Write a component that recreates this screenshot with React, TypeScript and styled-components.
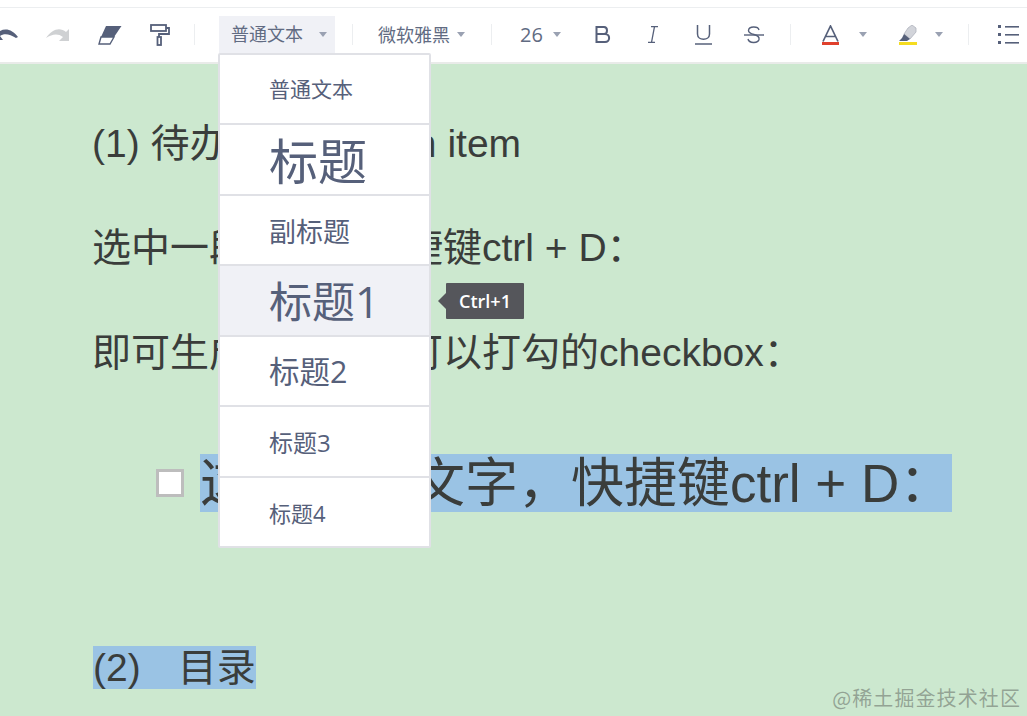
import * as React from 'react';
import styled, { createGlobalStyle } from 'styled-components';

const GlobalStyle = createGlobalStyle`
  html, body {
    margin: 0;
    height: 100%;
    overflow: hidden;
    background: #cce8cf;
  }
  #root {
    height: 100%;
  }
`;

const Page = styled.div`
  position: relative;
  display: flex;
  flex-direction: column;
  height: 716px;
  overflow: hidden;
  font-family: 'Liberation Sans', 'Noto Sans CJK SC', sans-serif;
`;

const TopStrip = styled.div`
  height: 7px;
  background: #fff;
  border-bottom: 1px solid #eceef0;
`;

const Toolbar = styled.div`
  display: flex;
  align-items: center;
  height: 54px;
  background: #fff;
  border-bottom: 2px solid #e9ebe9;
  color: #56607a;
  font-family: 'Open Sans', 'Noto Sans CJK SC', sans-serif;
`;

const Slot = styled.div<{ $ml: number }>`
  display: flex;
  flex: none;
  margin-left: ${(p) => p.$ml}px;
  margin-top: -1px;
`;

const Sep = styled.div<{ $ml: number }>`
  flex: none;
  width: 1px;
  height: 21px;
  margin-left: ${(p) => p.$ml}px;
  margin-top: -1px;
  background: #eceef0;
`;

const StyleSelect = styled.div`
  display: flex;
  flex: none;
  align-items: center;
  width: 116px;
  height: 37px;
  margin-left: 24px;
  margin-top: -1px;
  padding-left: 12px;
  box-sizing: border-box;
  background: #f0f1f6;
  font-size: 18px;
`;

const SelectText = styled.span<{ $ml: number; $size: number }>`
  flex: none;
  margin-left: ${(p) => p.$ml}px;
  margin-top: -1px;
  font-size: ${(p) => p.$size}px;
  line-height: 24px;
  color: #616b82;
`;

const Caret = styled.i<{ $ml: number }>`
  flex: none;
  width: 0;
  height: 0;
  margin-left: ${(p) => p.$ml}px;
  margin-top: -1px;
  border-left: 4.5px solid transparent;
  border-right: 4.5px solid transparent;
  border-top: 5px solid #9aa1b2;
`;

const Editor = styled.main`
  flex: 1;
  padding: 54px 0 0 92px;
  color: #3a3d3b;
  font-size: 39px;
  line-height: 52px;
`;

const Para = styled.p<{ $mt: number }>`
  margin: ${(p) => p.$mt}px 0 0;
  white-space: nowrap;
`;

const Marked = styled.span`
  margin-left: 1px;
  background: #9ac3e4;
`;

const NumGap = styled.span`
  display: inline-block;
  width: 37px;
`;

const TodoRow = styled.div`
  display: flex;
  align-items: center;
  height: 58px;
  margin: 75px 0 0 64px;
  white-space: nowrap;
  font-size: 53px;
`;

const Checkbox = styled.span`
  flex: none;
  width: 22px;
  height: 22px;
  margin-right: 16px;
  background: #fff;
  border: 3px solid #bdbdbd;
`;

const TodoText = styled.span`
  display: block;
  height: 58px;
  line-height: 60px;
  background: #9ac3e4;
`;

const Menu = styled.ul`
  position: absolute;
  left: 218px;
  top: 53px;
  width: 213px;
  height: 495px;
  margin: 0;
  padding: 0;
  box-sizing: border-box;
  list-style: none;
  background: #fff;
  border: 2px solid #e0e1e6;
  border-radius: 2px;
  font-family: 'Open Sans', 'Noto Sans CJK SC', sans-serif;
  color: #56607a;
`;

const MenuRow = styled.li<{ $size: number; $active?: boolean; $h: number; $lift: number }>`
  position: relative;
  display: flex;
  align-items: center;
  height: ${(p) => p.$h}px;
  padding: 0 0 ${(p) => p.$lift}px 49px;
  box-sizing: border-box;
  font-size: ${(p) => p.$size}px;
  background: ${(p) => (p.$active ? '#f0f1f6' : '#fff')};
  border-bottom: 2px solid #e0e1e6;

  &:last-child {
    border-bottom: 0;
  }
`;

const Tooltip = styled.div`
  position: absolute;
  left: 226px;
  top: 17px;
  width: 78px;
  height: 36px;
  display: flex;
  align-items: center;
  justify-content: center;
  background: #55565b;
  border-radius: 1px;
  color: #fff;
  font-size: 18px;
  font-weight: 600;

  &::before {
    content: '';
    position: absolute;
    left: -8px;
    top: 10px;
    border-top: 8px solid transparent;
    border-bottom: 8px solid transparent;
    border-right: 8px solid #55565b;
  }
`;

const Watermark = styled.div`
  position: absolute;
  right: 6px;
  bottom: 6px;
  font-size: 20px;
  line-height: 24px;
  letter-spacing: 1.1px;
  color: rgba(90, 95, 90, 0.5);
  font-family: 'Noto Sans CJK SC', sans-serif;
`;

const UndoIcon = () => (
  <svg width="26" height="14" viewBox="0 0 26 14">
    <path d="M5 5 C12 -1 20 1 26 9 L24 10 C18 6 12 5 8 8 L11 12 L0 12 L1 3 Z" fill="#56607a" />
  </svg>
);

const RedoIcon = () => (
  <svg width="24" height="14" viewBox="0 0 24 14">
    <path d="M23 1 L23 13 L13 13 L17 9 C12 5 6 6 0 10 C6 1 14 -1 20 4 Z" fill="#cfd1d3" />
  </svg>
);

const EraserIcon = () => (
  <svg width="24" height="20" viewBox="0 0 24 20">
    <path d="M8 1 H23.5 L16 12 H3 Z" fill="#56607a" />
    <path d="M3 12 H16 L12 19 H1 Z" fill="#fff" stroke="#56607a" strokeWidth="1.4" />
  </svg>
);

const RollerIcon = () => (
  <svg width="20" height="22" viewBox="0 0 20 22" fill="none" stroke="#56607a" strokeWidth="1.8">
    <rect x="1" y="1" width="15" height="6" />
    <path d="M16 4 H19 V10 H9 V13" />
    <rect x="7.5" y="13" width="3.5" height="8" />
  </svg>
);

const BoldIcon = () => (
  <svg width="16" height="17" viewBox="0 0 16 17" fill="none" stroke="#56607a" strokeWidth="2">
    <path d="M1.5 1 H9 C13 1 13 8 9 8 H1.5 Z M1.5 8 H10 C15.5 8 15.5 16 10 16 H1.5 Z" />
  </svg>
);

const ItalicIcon = () => (
  <svg width="10" height="17" viewBox="0 0 10 17" fill="none" stroke="#56607a" strokeWidth="1.3">
    <path d="M3 .7 H10 M0 16.3 H7 M6.5 .7 L3.5 16.3" />
  </svg>
);

const UnderlineIcon = () => (
  <svg width="17" height="20" viewBox="0 0 17 20" fill="none" stroke="#56607a" strokeWidth="1.5">
    <path d="M2.5 0 V9 C2.5 16 14.5 16 14.5 9 V0" />
    <path d="M0 19 H17" />
  </svg>
);

const StrikeIcon = () => (
  <svg width="20" height="18" viewBox="0 0 20 18" fill="none" stroke="#56607a" strokeWidth="1.4">
    <path d="M15 4 C14 0 5 0 4.5 4.5 C4.5 7 8 8 10 8.5 C14 9.5 15.5 11 15 13.5 C14 17.5 5 17.5 4 13" />
    <path d="M0 9 H20" />
  </svg>
);

const FontColorIcon = () => (
  <svg width="17" height="20" viewBox="0 0 17 20">
    <path d="M1 16.5 L8.5 1 L16 16.5 M4 11.5 H13" fill="none" stroke="#56607a" strokeWidth="1.7" />
    <rect y="17" width="17" height="3" fill="#e0402c" />
  </svg>
);

const HighlightIcon = () => (
  <svg width="18" height="20" viewBox="0 0 18 20">
    <path d="M9 3 L13 0 L17 3 V7 L11 14 L5 9 Z" fill="#d2d4da" stroke="#aeb2bc" strokeWidth=".8" />
    <path d="M5 9 L11 14 L8 16 H0 L3 13 Z" fill="#56607a" />
    <rect y="17" width="18" height="3" fill="#f5dc1f" />
  </svg>
);

const ListIcon = () => (
  <svg width="21" height="19" viewBox="0 0 21 19" fill="#56607a">
    <rect width="3" height="3" />
    <rect y="8" width="3" height="3" />
    <rect y="16" width="3" height="3" />
    <rect x="7" y="1" width="14" height="1.6" />
    <rect x="7" y="9" width="14" height="1.6" />
    <rect x="7" y="17" width="14" height="1.6" />
  </svg>
);

const menuRows = [
  { label: '普通文本', size: 21, h: 70, lift: 3 },
  { label: '标题', size: 49, h: 71, lift: 3 },
  { label: '副标题', size: 27, h: 70, lift: 0 },
  { label: '标题1', size: 43, h: 71, lift: 2, active: true },
  { label: '标题2', size: 30.5, h: 70, lift: 3 },
  { label: '标题3', size: 24, h: 71, lift: 1 },
  { label: '标题4', size: 22, h: 68, lift: 0 },
];

export default function App() {
  return (
    <Page>
      <GlobalStyle />
      <TopStrip />
      <Toolbar>
        <Slot $ml={-8}><UndoIcon /></Slot>
        <Slot $ml={28}><RedoIcon /></Slot>
        <Slot $ml={28}><EraserIcon /></Slot>
        <Slot $ml={28}><RollerIcon /></Slot>
        <Sep $ml={24} />
        <StyleSelect>
          <SelectText $ml={0} $size={18}>普通文本</SelectText>
          <Caret $ml={16} />
        </StyleSelect>
        <Sep $ml={17} />
        <SelectText $ml={25} $size={18}>微软雅黑</SelectText>
        <Caret $ml={7} />
        <Sep $ml={26} />
        <SelectText $ml={28} $size={20}>26</SelectText>
        <Caret $ml={10} />
        <Slot $ml={34}><BoldIcon /></Slot>
        <Slot $ml={37}><ItalicIcon /></Slot>
        <Slot $ml={37}><UnderlineIcon /></Slot>
        <Slot $ml={32}><StrikeIcon /></Slot>
        <Sep $ml={26} />
        <Slot $ml={31}><FontColorIcon /></Slot>
        <Caret $ml={20} />
        <Slot $ml={32}><HighlightIcon /></Slot>
        <Caret $ml={18} />
        <Sep $ml={25} />
        <Slot $ml={29}><ListIcon /></Slot>
      </Toolbar>
      <Editor>
        <Para $mt={0}>(1) 待办事项&nbsp; Action item</Para>
        <Para $mt={52}>选中一段文字，快捷键ctrl + D：</Para>
        <Para $mt={53}>即可生成一个前面可以打勾的checkbox：</Para>
        <TodoRow>
          <Checkbox />
          <TodoText>这是一段文字，快捷键ctrl + D：</TodoText>
        </TodoRow>
        <Para $mt={130}><Marked>(2)<NumGap />目录</Marked></Para>
      </Editor>
      <Menu>
        {menuRows.map((row) => (
          <MenuRow key={row.label} $size={row.size} $h={row.h} $lift={row.lift} $active={row.active}>
            {row.label}
            {row.active && <Tooltip>Ctrl+1</Tooltip>}
          </MenuRow>
        ))}
      </Menu>
      <Watermark>@稀土掘金技术社区</Watermark>
    </Page>
  );
}
